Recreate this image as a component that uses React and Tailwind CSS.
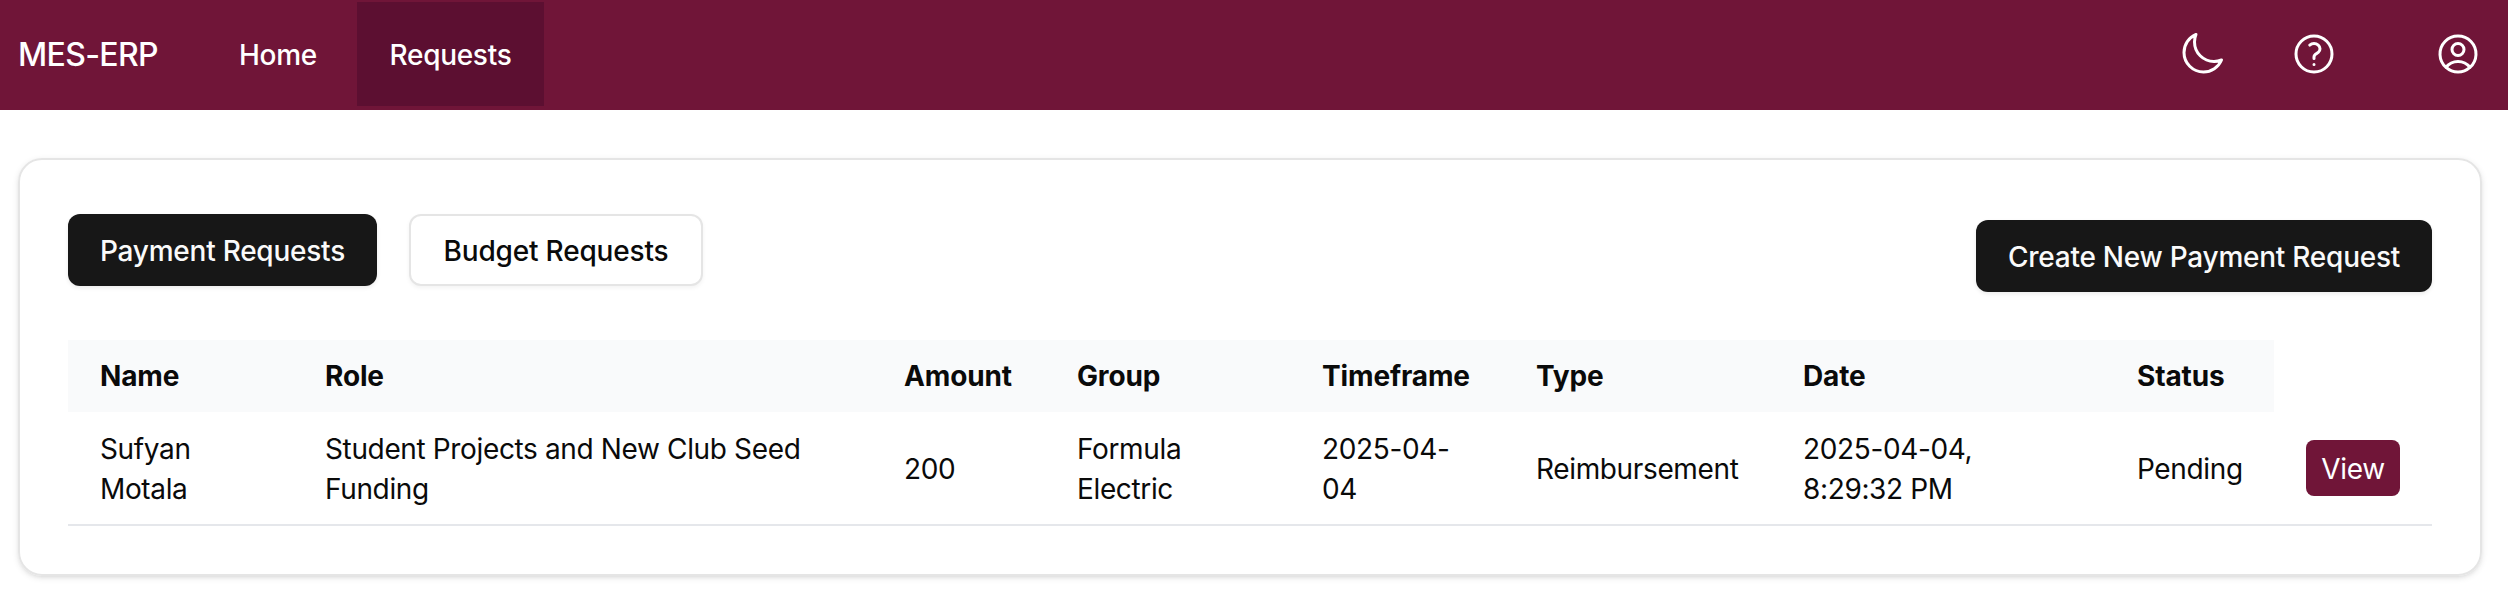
import React from "react";
import { HiOutlineMoon, HiOutlineQuestionMarkCircle, HiOutlineUserCircle } from "react-icons/hi2";

const columns = [
  { label: "Name", width: "w-[225px]" },
  { label: "Role", width: "w-[579px]" },
  { label: "Amount", width: "w-[173px]" },
  { label: "Group", width: "w-[245px]" },
  { label: "Timeframe", width: "w-[214px]" },
  { label: "Type", width: "w-[267px]" },
  { label: "Date", width: "w-[334px]" },
  { label: "Status", width: "w-[169px]" },
];

const row = [
  "Sufyan Motala",
  "Student Projects and New Club Seed Funding",
  "200",
  "Formula Electric",
  "2025-04-04",
  "Reimbursement",
  "2025-04-04, 8:29:32 PM",
  "Pending",
];

function Navbar() {
  return (
    <nav className="flex h-[110px] items-start bg-[#701538] pt-0.5 text-[28px] font-medium tracking-[-0.3px] text-white">
      <div className="flex h-[106px] w-[207px] items-center pl-[18px] text-[32px] font-medium tracking-[-0.65px]">MES-ERP</div>
      <a className="mr-[8px] flex h-[105px] w-[142px] items-center justify-center">Home</a>
      <a className="flex h-[104px] w-[187px] items-center justify-center bg-[#5c0f31] pt-px">Requests</a>
      <div className="ml-auto flex h-[104px] items-center pr-[26px]">
        <HiOutlineMoon className="size-12" />
        <HiOutlineQuestionMarkCircle className="ml-16 size-12" />
        <HiOutlineUserCircle className="ml-24 size-12" />
      </div>
    </nav>
  );
}

export default function App() {
  return (
    <div className="h-[616px] overflow-hidden bg-white font-['Inter',sans-serif] text-[28px] leading-10 text-[#0a0a0a]">
      <Navbar />
      <main className="mt-12 ml-[18px] h-[418px] w-[2464px] rounded-[24px] border-2 border-[#e5e5e5] px-12 pt-[54px] shadow-[0_2px_6px_rgba(0,0,0,0.1),0_2px_4px_-2px_rgba(0,0,0,0.1)]">
        <div className="flex items-start font-medium tracking-[-0.24px]">
          <button className="h-[72px] w-[309px] rounded-[12px] bg-[#171717] pt-px text-[#fafafa] shadow-[0_2px_4px_rgba(0,0,0,0.08)]">Payment Requests</button>
          <button className="ml-8 h-[72px] w-[294px] rounded-[12px] border-2 border-[#e5e5e5] bg-white pt-px tracking-[-0.18px] shadow-[0_2px_4px_rgba(0,0,0,0.05)]">Budget Requests</button>
          <button className="mt-1.5 ml-auto h-[72px] w-[456px] rounded-[12px] bg-[#171717] pt-px text-[#fafafa] shadow-[0_2px_4px_rgba(0,0,0,0.08)]">Create New Payment Request</button>
        </div>
        <table className="mt-12 w-[2364px] table-fixed border-collapse text-left">
          <thead>
            <tr>
              {columns.map((c) => (
                <th key={c.label} className={`${c.width} h-[72px] bg-[#f9fafb] px-8 py-0 font-bold tracking-[-0.15px]`}>{c.label}</th>
              ))}
              <th className="w-[158px]" />
            </tr>
          </thead>
          <tbody className="tracking-[-0.36px]">
            <tr className="border-b-2 border-[#e5e7eb]">
              {row.map((v, i) => (
                <td key={i} className="px-8 pt-[17px] pb-[15px]">{v}</td>
              ))}
              <td className="px-8 py-4">
                <button className="block h-14 w-[94px] rounded-[8px] bg-[#701538] pt-px text-white">View</button>
              </td>
            </tr>
          </tbody>
        </table>
      </main>
    </div>
  );
}
